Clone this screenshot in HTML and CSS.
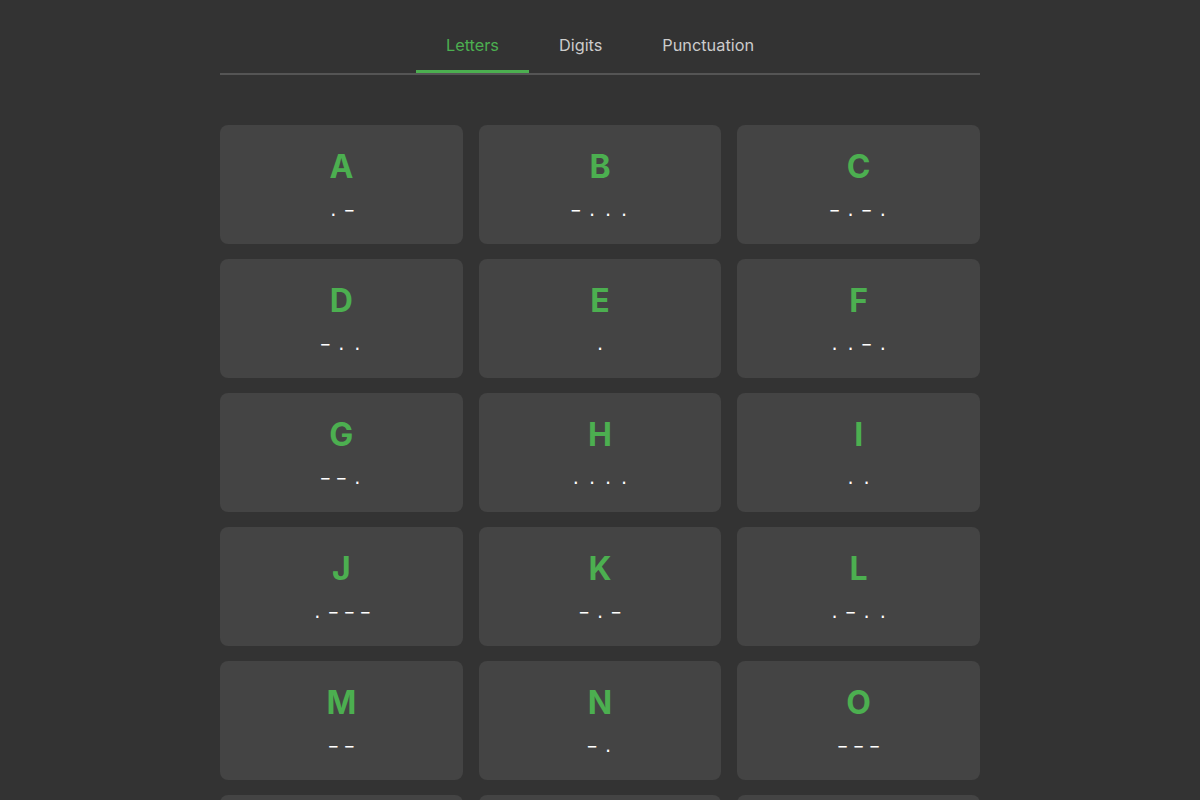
FILE: index.html
```html
<!DOCTYPE html>
<html lang="en">
<head>
<meta charset="utf-8">
<title>Morse Code</title>
<link rel="stylesheet" href="styles.css">
</head>
<body>
<div class="container">
  <nav class="tabs">
    <div class="tab active">Letters</div>
    <div class="tab">Digits</div>
    <div class="tab">Punctuation</div>
  </nav>
  <div class="grid">
    <div class="card"><div class="char">A</div><div class="code">.−</div></div>
    <div class="card"><div class="char">B</div><div class="code">−...</div></div>
    <div class="card"><div class="char">C</div><div class="code">−.−.</div></div>
    <div class="card"><div class="char">D</div><div class="code">−..</div></div>
    <div class="card"><div class="char">E</div><div class="code">.</div></div>
    <div class="card"><div class="char">F</div><div class="code">..−.</div></div>
    <div class="card"><div class="char">G</div><div class="code">−−.</div></div>
    <div class="card"><div class="char">H</div><div class="code">....</div></div>
    <div class="card"><div class="char">I</div><div class="code">..</div></div>
    <div class="card"><div class="char">J</div><div class="code">.−−−</div></div>
    <div class="card"><div class="char">K</div><div class="code">−.−</div></div>
    <div class="card"><div class="char">L</div><div class="code">.−..</div></div>
    <div class="card"><div class="char">M</div><div class="code">−−</div></div>
    <div class="card"><div class="char">N</div><div class="code">−.</div></div>
    <div class="card"><div class="char">O</div><div class="code">−−−</div></div>
    <div class="card"><div class="char">P</div><div class="code">.−−.</div></div>
    <div class="card"><div class="char">Q</div><div class="code">−−.−</div></div>
    <div class="card"><div class="char">R</div><div class="code">.−.</div></div>
    <div class="card"><div class="char">S</div><div class="code">...</div></div>
    <div class="card"><div class="char">T</div><div class="code">−</div></div>
    <div class="card"><div class="char">U</div><div class="code">..−</div></div>
    <div class="card"><div class="char">V</div><div class="code">...−</div></div>
    <div class="card"><div class="char">W</div><div class="code">.−−</div></div>
    <div class="card"><div class="char">X</div><div class="code">−..−</div></div>
    <div class="card"><div class="char">Y</div><div class="code">−.−−</div></div>
    <div class="card"><div class="char">Z</div><div class="code">−−..</div></div>
  </div>
</div>
</body>
</html>
```
FILE: styles.css
```css
html, body {
  margin: 0;
  padding: 0;
  background: #333333;
}
body {
  font-family: Inter, "Liberation Sans", sans-serif;
  color: #ffffff;
}
.container {
  width: 760px;
  margin: 0 auto;
  padding-top: 27px;
}
.tabs {
  display: flex;
  justify-content: center;
  border-bottom: 2px solid #555555;
}
.tab {
  padding: 9px 30px 15px;
  font-size: 16.3px;
  line-height: 19px;
  color: #cccccc;
  border-bottom: 3px solid transparent;
}
.tab.active {
  color: #4caf50;
  border-bottom-color: #4caf50;
}
.grid {
  margin-top: 50px;
  display: grid;
  grid-template-columns: repeat(3, 1fr);
  gap: 15px 16px;
}
.card {
  background: #444444;
  border-radius: 8px;
  padding: 22px 0 24px;
  text-align: center;
}
.char {
  font-size: 32px;
  line-height: 39px;
  font-weight: 700;
  color: #4caf50;
}
.code {
  margin-top: 15px;
  font-family: "DejaVu Sans Mono", monospace;
  font-size: 16px;
  line-height: 19px;
  letter-spacing: 6.4px;
  padding-left: 6.4px;
  color: #ffffff;
}
```
